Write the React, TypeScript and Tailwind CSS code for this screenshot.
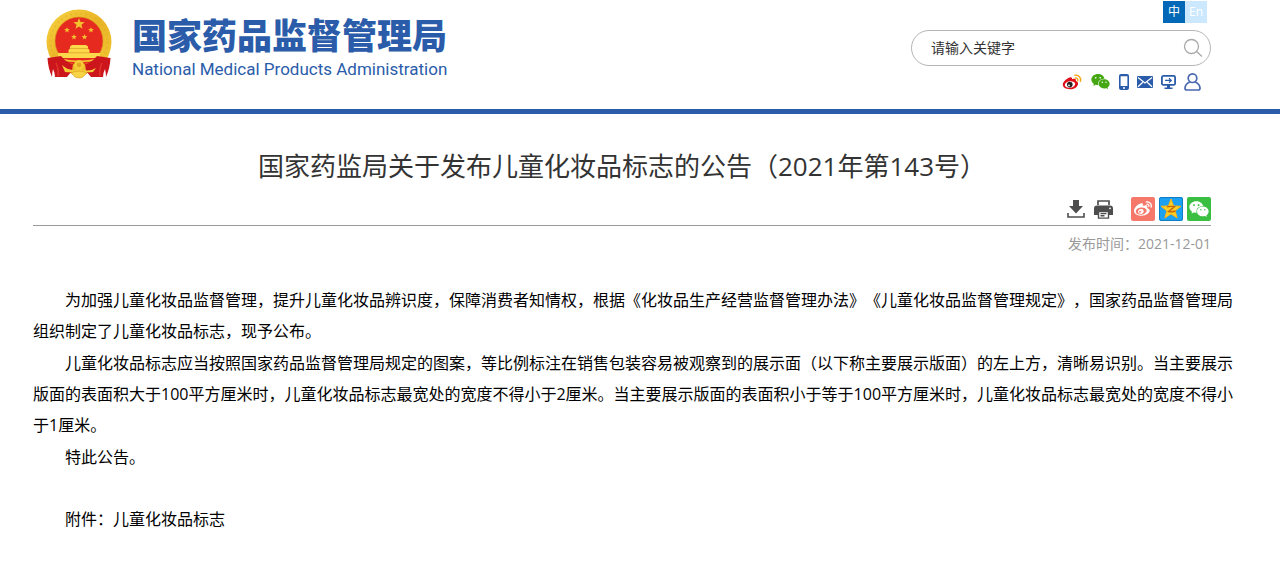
import React from 'react';
import { FaWeibo } from 'react-icons/fa';
import { AiFillWechat } from 'react-icons/ai';

interface StarProps {
    cx: number;
    cy: number;
    r: number;
    fill: string;
    stroke?: string;
}

const Star: React.FC<StarProps> = ({ cx, cy, r, fill, stroke }) => {
    const points = Array.from({ length: 10 }, (_, i) => {
        const radius = i % 2 === 0 ? r : r * 0.42;
        const angle = (Math.PI / 5) * i - Math.PI / 2;
        return `${(cx + radius * Math.cos(angle)).toFixed(2)},${(cy + radius * Math.sin(angle)).toFixed(2)}`;
    }).join(' ');
    return <polygon points={points} fill={fill} stroke={stroke} strokeLinejoin="round" />;
};

const Emblem = () => (
    <svg viewBox="0 0 66 70" className="h-[70px] w-[66px]" aria-hidden="true">
        <defs>
            <linearGradient id="gold" x1="0" y1="0" x2="1" y2="1">
                <stop offset="0" stopColor="#f7d33f" />
                <stop offset="0.5" stopColor="#e9b427" />
                <stop offset="1" stopColor="#f3c935" />
            </linearGradient>
        </defs>
        <circle cx="33" cy="33" r="32.5" fill="url(#gold)" />
        <circle cx="33" cy="33" r="28.5" fill="none" stroke="#d99a1c" strokeWidth="2" strokeDasharray="2 3" opacity="0.25" />
        <circle cx="33" cy="32" r="24" fill="#e62a20" stroke="#d9981d" strokeWidth="0.6" />
        <Star cx={33} cy={15} r={6} fill="#f3c32e" />
        <Star cx={21} cy={21} r={3} fill="#f3c32e" />
        <Star cx={45} cy={21} r={3} fill="#f3c32e" />
        <Star cx={28} cy={28} r={3} fill="#f3c32e" />
        <Star cx={38.5} cy={28} r={3} fill="#f3c32e" />
        <path d="M24 37.5 26 36h14l2 1.500v2l1.500 1.500v3H54v5H12v-5h10.500v-3l1.500-1.500z" fill="#fbd94a" />
        <path d="M24 39.500h18M22.500 43.800h21" stroke="#dd9b22" strokeWidth="0.7" />
        <path d="M12 49.500h42l-4 4.500H16z" fill="#e62a20" />
        <path d="M13 50q20 5 40 0" fill="none" stroke="#f3c32e" strokeWidth="1.500" />
        <path d="M1.500 49 15 47q7 8 12 8l-1 7-5 6H9q0-4-2-8-1 4-1 8-4-9-4.500-19z" fill="#cc161c" />
        <path d="M64.500 49 51 47q-7 8-12 8l1 7 5 6h12q0-4 2-8 1 4 1 8 4-9 4.500-19z" fill="#cc161c" />
        <path d="M10 54q3 6 2 13M56 54q-3 6-2 13" fill="none" stroke="#e0342b" strokeWidth="1.500" />
        <path d="M16 56q9 8 17 3 8 5 17 0l-3 4q-8 1-14-1-6 2-14 1z" fill="#f5cb37" />
        <circle cx="33" cy="56" r="5" fill="#f5cb37" />
        <circle cx="33" cy="56" r="2.200" fill="#e2a422" />
        <path d="M25 64q8-4 16 0l-4 4q-4 2-8 0z" fill="#f7d445" stroke="#d9981d" strokeWidth="0.6" />
    </svg>
);

const WeiboColor = () => (
    <svg viewBox="0 0 20 18" className="h-[18px] w-5" aria-hidden="true">
        <path d="M7.500 4.500c1.600-.8 3 0 2.500 1.800 2.500-1 4.500-.3 3.900 1.700 1.700.6 2.400 1.700 2.100 3.200-.6 3-4 5-8 5C3.600 16.200.8 14.400.8 11.500c0-2.600 3.700-5.900 6.700-7z" fill="#e0101a" />
        <ellipse cx="8" cy="11.500" rx="5.200" ry="3.200" fill="#fff" transform="rotate(-8 8 11.500)" />
        <circle cx="7.800" cy="11.600" r="2.800" fill="#2b2020" />
        <circle cx="7" cy="12.400" r="0.900" fill="#fff" />
        <path d="M13 2.300c3.700-.6 6.400 2.300 5.400 5.900M13.300 5c1.800-.2 2.900 1 2.400 2.700" fill="none" stroke="#f4a91f" strokeWidth="1.500" strokeLinecap="round" />
    </svg>
);

const PhoneIcon = () => (
    <svg viewBox="0 0 10 16" className="h-4 w-2.5" aria-hidden="true">
        <path fillRule="evenodd" d="M2 0h6a2 2 0 0 1 2 2v12a2 2 0 0 1-2 2H2a2 2 0 0 1-2-2V2a2 2 0 0 1 2-2zM1.600 2.200v9.800h6.800V2.200zM5 13a1 1 0 1 0 0 2 1 1 0 0 0 0-2z" fill="#2a5caa" />
    </svg>
);

const MailIcon = () => (
    <svg viewBox="0 0 16 12" className="h-3 w-4" aria-hidden="true">
        <rect width="16" height="12" rx="1" fill="#2a5caa" />
        <path d="M1 1.500l7 5.500 7-5.500M1 10.800l4.800-4.600M15 10.800l-4.800-4.600" fill="none" stroke="#fff" strokeWidth="1.200" />
    </svg>
);

const MonitorIcon = () => (
    <svg viewBox="0 0 15 14" className="h-3.5 w-[15px]" aria-hidden="true">
        <rect x="0.900" y="0.900" width="13.200" height="9" rx="1.500" fill="none" stroke="#2a5caa" strokeWidth="1.800" />
        <path d="M6 10h3v2.400h2.500V14h-8v-1.600H6z" fill="#2a5caa" />
        <path d="M4 5.400h6M8 3.300l2.300 2.100L8 7.500" fill="none" stroke="#2a5caa" strokeWidth="1.200" />
    </svg>
);

const UserIcon = () => (
    <svg viewBox="0 0 17 18" className="h-[18px] w-[17px]" aria-hidden="true">
        <g fill="none" stroke="#4a68b0" strokeWidth="1.700" strokeLinejoin="round">
            <ellipse cx="8.500" cy="5.200" rx="4.300" ry="4.300" />
            <path d="M5.800 9C3 10.200 1 12.500 1 15.200 1 16.500 1.700 17 3 17h11c1.300 0 2-.5 2-1.800 0-2.700-2-5-4.800-6.200" />
        </g>
    </svg>
);

const SearchIcon = () => (
    <svg viewBox="0 0 20 20" className="size-5" aria-hidden="true">
        <g fill="none" stroke="#a9a9a9" strokeWidth="1.300">
            <circle cx="8.500" cy="8.500" r="7" />
            <path d="M13.500 13.500l5.500 5" />
        </g>
    </svg>
);

const DownloadIcon = () => (
    <svg viewBox="0 0 18 18" className="size-[18px]" aria-hidden="true">
        <path d="M6 0h6v6h4l-7 7.500L2 6h4z" fill="#4d4d4d" />
        <path d="M1 13v4h16v-4" fill="none" stroke="#4d4d4d" strokeWidth="1.600" />
    </svg>
);

const PrintIcon = () => (
    <svg viewBox="0 0 19 19" className="size-[19px]" aria-hidden="true">
        <path d="M4 5V1h11v4" fill="none" stroke="#4d4d4d" strokeWidth="1.700" />
        <path d="M3 5.500h13a3 3 0 0 1 3 3V15h-4v-4H4v4H0V8.500a3 3 0 0 1 3-3z" fill="#4d4d4d" />
        <circle cx="16" cy="8.300" r="0.900" fill="#fff" />
        <path d="M4.500 11.500h10v6.600h-10zM6.500 13.600h6M6.500 15.800h4" fill="none" stroke="#4d4d4d" strokeWidth="1.400" />
    </svg>
);

const QzoneIcon = () => (
    <svg viewBox="0 0 24 24" className="size-6" aria-hidden="true">
        <rect width="24" height="24" rx="2" fill="#1ba0f2" />
        <rect x="0.500" y="0.500" width="23" height="23" rx="2" fill="none" stroke="#0f7cc4" />
        <Star cx={12} cy={12.5} r={10.5} fill="#fed023" stroke="#f5b31a" />
        <path d="M8 9.800q4-.8 7.500-.2l-6 5q3.500.6 7-.6" fill="none" stroke="#c9690b" strokeWidth="1.400" />
    </svg>
);

const channels = [
    { label: '微博', icon: <WeiboColor /> },
    { label: '微信', icon: <AiFillWechat className="size-[21px] text-[#45a812]" /> },
    { label: '手机版', icon: <PhoneIcon /> },
    { label: '邮箱', icon: <MailIcon /> },
    { label: '电脑版', icon: <MonitorIcon /> },
    { label: '个人中心', icon: <UserIcon /> },
];

const Header = () => (
    <header className="flex h-[114px] items-start justify-between border-b-5 border-[#2a5caa] pr-[69px] pl-[46px]">
        <a href="#" className="flex gap-5 pt-[9px] text-[#2a5caa]">
            <Emblem />
            <span className="flex flex-col pt-1.5">
                <span className="text-[35px] leading-[42px] font-black">国家药品监督管理局</span>
                <span className="font-['Roboto',sans-serif] text-[17px] leading-6">National Medical Products Administration</span>
            </span>
        </a>
        <div className="flex w-[300px] flex-col items-end">
            <div className="mt-px mr-1 flex text-xs">
                <button className="h-[22px] w-[22px] bg-[#0068b7] text-white">中</button>
                <button className="h-[22px] w-[22px] bg-[#cce8ff] text-white">En</button>
            </div>
            <form className="mt-[7px] flex h-9 w-full items-center rounded-full border border-[#b5b5b5] pr-[7px] pl-[19px]">
                <input
                    type="text"
                    aria-label="请输入关键字"
                    placeholder="请输入关键字"
                    className="min-w-0 flex-1 text-sm text-[#333] outline-none placeholder:text-[#333]"
                />
                <button type="button" aria-label="搜索"><SearchIcon /></button>
            </form>
            <nav className="mt-[5px] mr-2.5 flex items-center gap-2">
                {channels.map(({ label, icon }) => (
                    <a key={label} href="#" aria-label={label}>{icon}</a>
                ))}
            </nav>
        </div>
    </header>
);

export default function App() {
    return (
        <div className="bg-white font-['Open_Sans','Noto_Sans_CJK_SC',sans-serif] [text-spacing-trim:space-all]">
            <Header />
            <main className="pl-[33px]">
                <div className="mr-[69px]">
                    <h1 className="pt-8 text-center text-[26px] leading-10 text-[#333]">
                        国家药监局关于发布儿童化妆品标志的公告（2021年第143号）
                    </h1>
                    <div className="mt-[11px] flex items-center justify-end border-b border-[#999] pb-1">
                        <button aria-label="下载" className="mr-[9px]"><DownloadIcon /></button>
                        <button aria-label="打印" className="mr-[18px]"><PrintIcon /></button>
                        <div className="flex gap-1">
                            <button aria-label="分享到微博" className="flex size-6 items-center justify-center rounded-xs bg-[#f5786a] text-white">
                                <FaWeibo className="size-[18px]" />
                            </button>
                            <button aria-label="分享到QQ空间"><QzoneIcon /></button>
                            <button aria-label="分享到微信" className="flex size-6 items-center justify-center rounded-xs bg-[#3bbf42] text-white">
                                <AiFillWechat className="size-[22px]" />
                            </button>
                        </div>
                    </div>
                    <p className="mt-2 text-right text-sm text-[#999]">发布时间：2021-12-01</p>
                </div>
                <article className="mt-[31px] mr-11 flex flex-col gap-px pb-9 text-base leading-[31px] text-black">
                    <p className="indent-8">
                        为加强儿童化妆品监督管理，提升儿童化妆品辨识度，保障消费者知情权，根据《化妆品生产经营监督管理办法》《儿童化妆品监督管理规定》，国家药品监督管理局组织制定了儿童化妆品标志，现予公布。
                    </p>
                    <p className="indent-8">
                        儿童化妆品标志应当按照国家药品监督管理局规定的图案，等比例标注在销售包装容易被观察到的展示面（以下称主要展示版面）的左上方，清晰易识别。当主要展示版面的表面积大于100平方厘米时，儿童化妆品标志最宽处的宽度不得小于2厘米。当主要展示版面的表面积小于等于100平方厘米时，儿童化妆品标志最宽处的宽度不得小于1厘米。
                    </p>
                    <p className="indent-8">特此公告。</p>
                    <p className="mt-[30px] indent-8">
                        附件：<a href="#">儿童化妆品标志</a>
                    </p>
                </article>
            </main>
        </div>
    );
}
